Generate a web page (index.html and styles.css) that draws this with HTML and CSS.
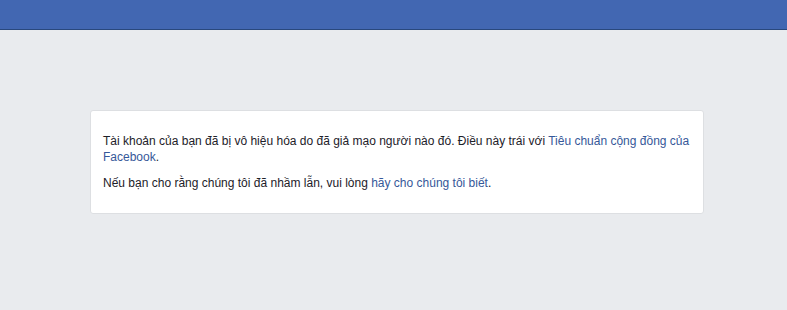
FILE: index.html
```html
<!DOCTYPE html>
<html lang="vi">
<head>
    <meta charset="UTF-8">
    <meta name="viewport" content="width=device-width, initial-scale=1.0">
    <title>Facebook</title>
    <link rel="stylesheet" href="styles.css">
</head>
<body>
    <div class="topbar"></div>
    <div class="content">
        <div class="notice">
            <p>Tài khoản của bạn đã bị vô hiệu hóa do đã giả mạo người nào đó. Điều này trái với <a href="#">Tiêu chuẩn cộng đồng của Facebook</a>.</p>
            <p>Nếu bạn cho rằng chúng tôi đã nhầm lẫn, vui lòng <a href="#">hãy cho chúng tôi biết</a>.</p>
        </div>
    </div>
</body>
</html>
```

FILE: styles.css
```css
body {
    margin: 0;
    background-color: #e9ebee;
    font-family: 'Liberation Sans', Arial, Helvetica, sans-serif;
    font-size: 12px;
    color: #1d2129;
}

.topbar {
    height: 29px;
    background-color: #4267b2;
    border-bottom: 1px solid #29487d;
}

.content {
    padding-top: 80px;
    padding-left: 90px;
}

.notice {
    width: 588px;
    background-color: #fff;
    border: 1px solid #dddfe2;
    border-radius: 3px;
    padding: 22px 12px 22px 12px;
}

.notice p {
    margin: 0;
    line-height: 16px;
}

.notice p + p {
    margin-top: 10px;
}

.notice a {
    color: #365899;
    text-decoration: none;
}
```
